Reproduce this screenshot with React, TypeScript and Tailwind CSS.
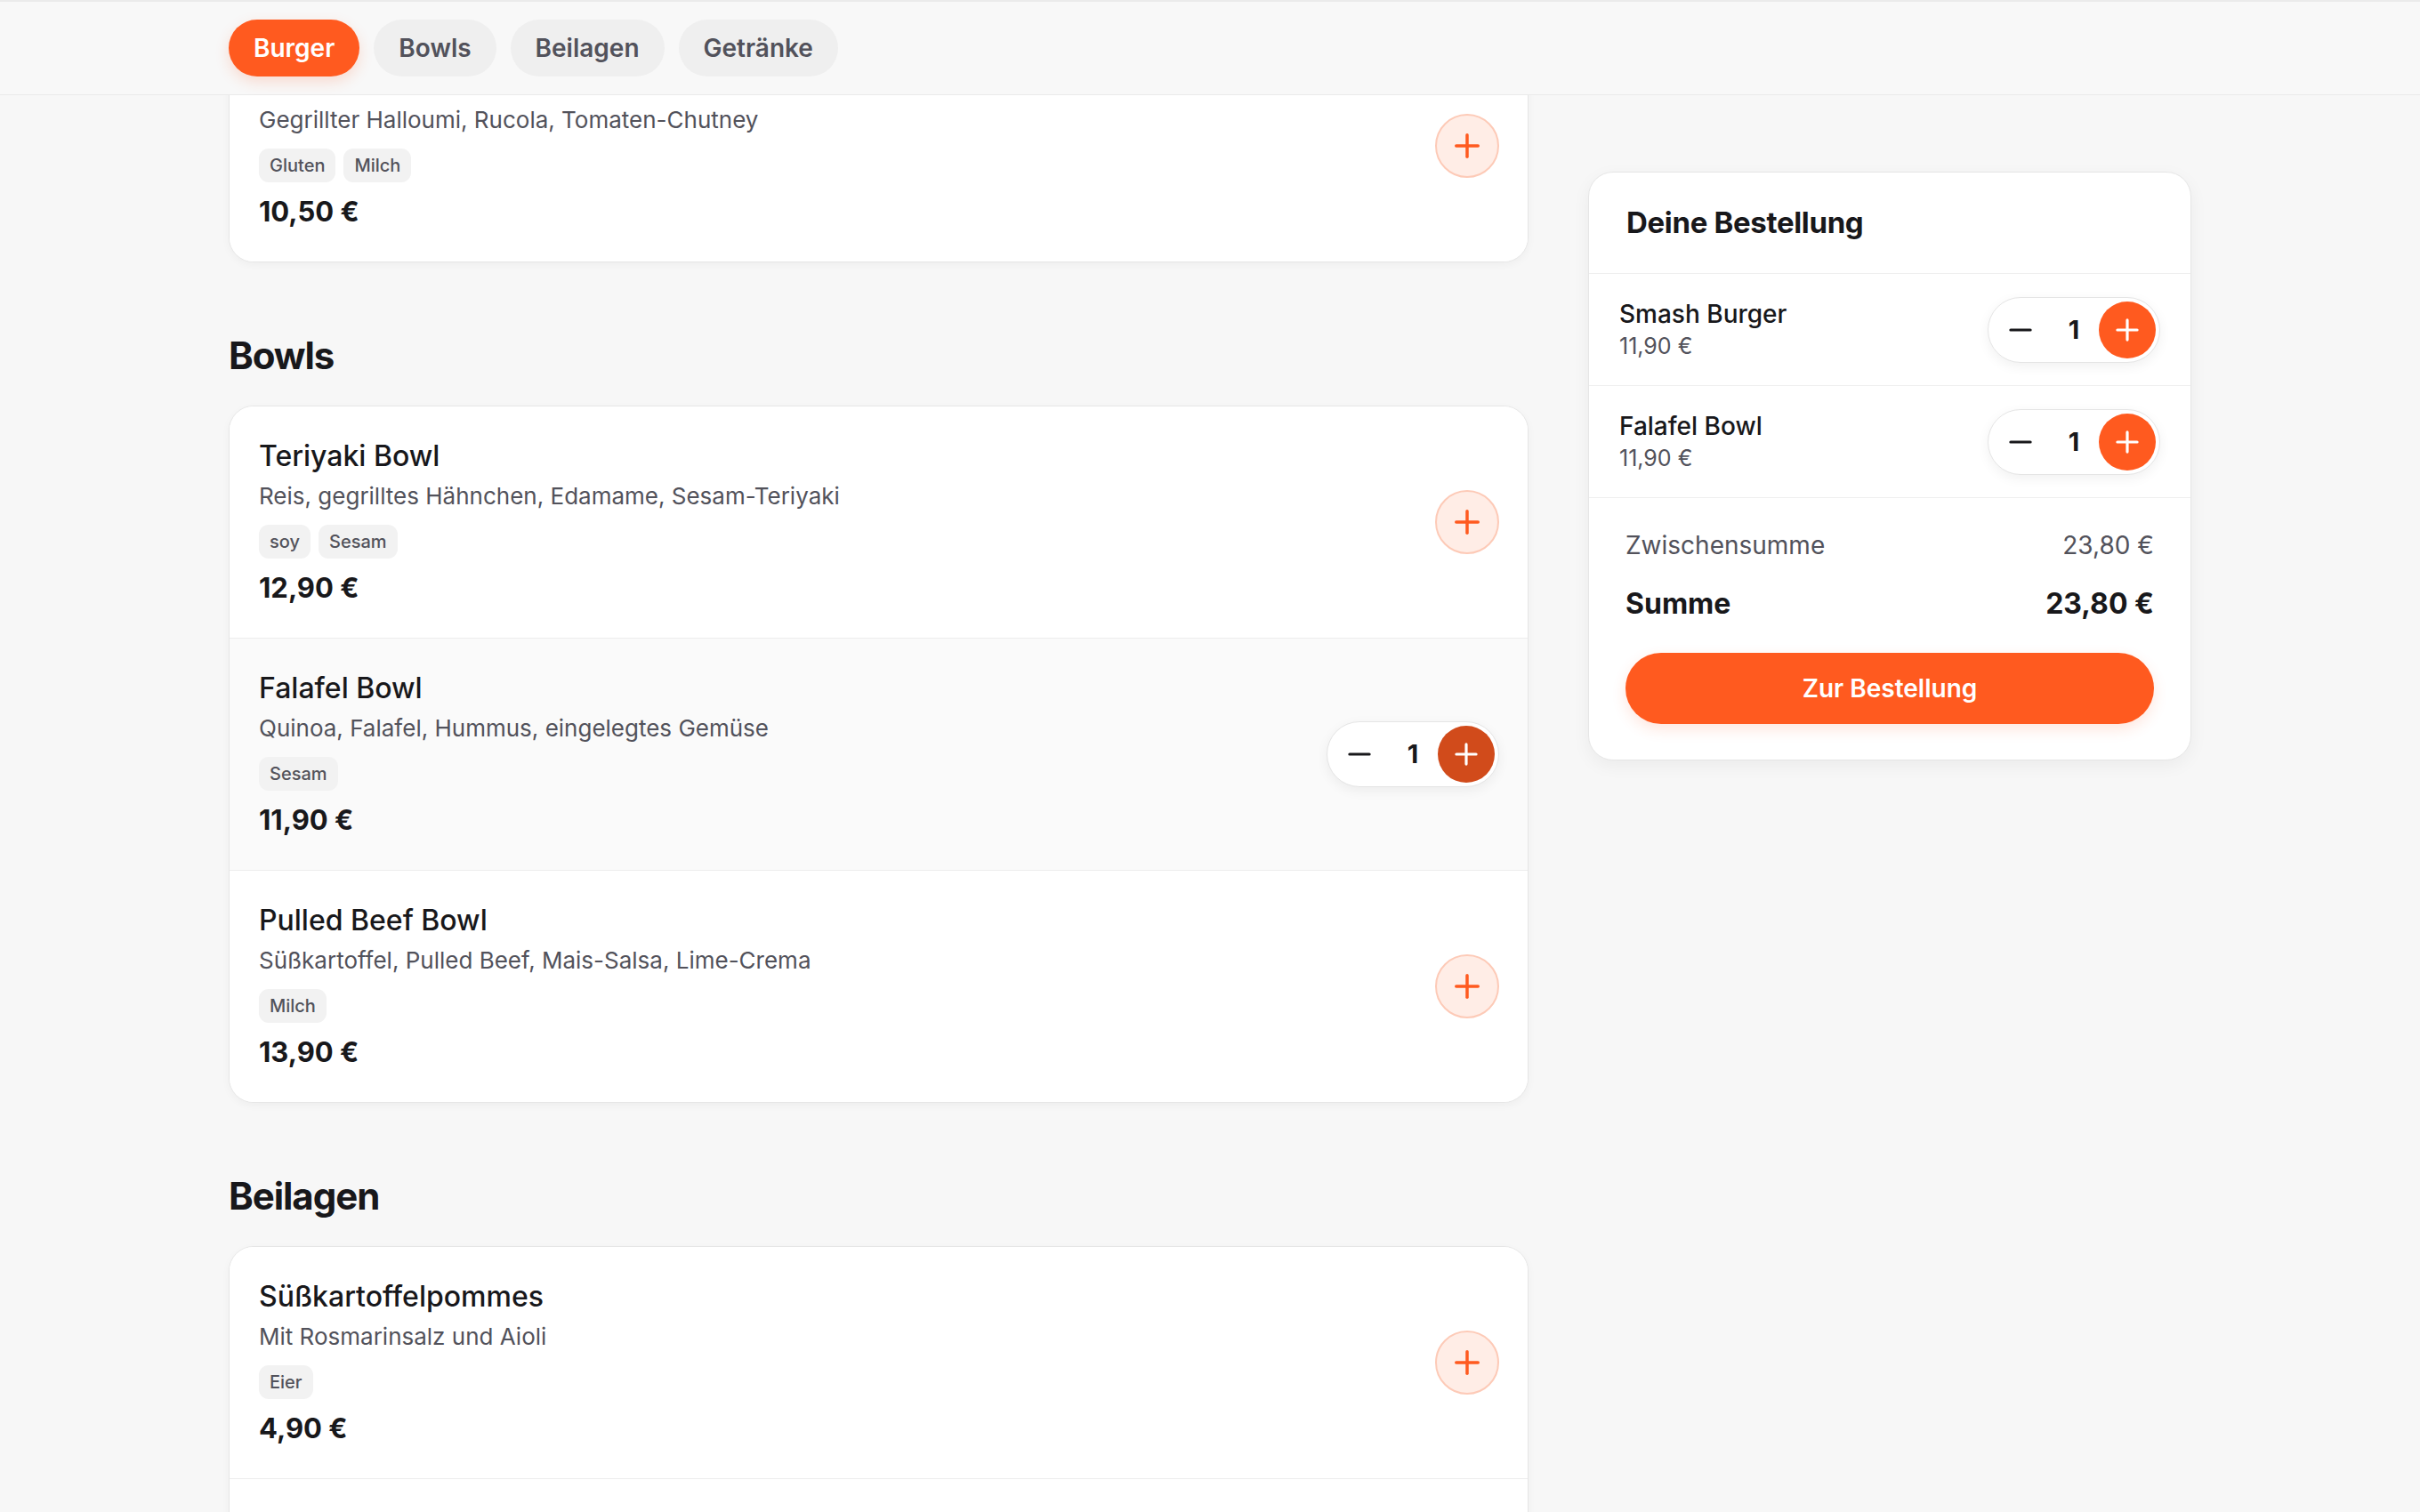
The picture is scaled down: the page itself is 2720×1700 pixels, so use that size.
import clsx from 'clsx';
import { Minus, Plus } from 'lucide-react';

type Item = {
  name: string;
  desc: string;
  tags: string[];
  price: string;
  qty?: number;
};

const burgers: Item[] = [
  {
    name: 'Halloumi Deluxe',
    desc: 'Gegrillter Halloumi, Rucola, Tomaten-Chutney',
    tags: ['Gluten', 'Milch'],
    price: '10,50 €',
  },
];

const bowls: Item[] = [
  {
    name: 'Teriyaki Bowl',
    desc: 'Reis, gegrilltes Hähnchen, Edamame, Sesam-Teriyaki',
    tags: ['soy', 'Sesam'],
    price: '12,90 €',
  },
  {
    name: 'Falafel Bowl',
    desc: 'Quinoa, Falafel, Hummus, eingelegtes Gemüse',
    tags: ['Sesam'],
    price: '11,90 €',
    qty: 1,
  },
  {
    name: 'Pulled Beef Bowl',
    desc: 'Süßkartoffel, Pulled Beef, Mais-Salsa, Lime-Crema',
    tags: ['Milch'],
    price: '13,90 €',
  },
];

const sides: Item[] = [
  {
    name: 'Süßkartoffelpommes',
    desc: 'Mit Rosmarinsalz und Aioli',
    tags: ['Eier'],
    price: '4,90 €',
  },
  {
    name: 'Pommes Frites',
    desc: 'Knusprig, mit Meersalz',
    tags: [],
    price: '3,90 €',
  },
];

const cart = [
  { name: 'Smash Burger', price: '11,90 €', qty: 1 },
  { name: 'Falafel Bowl', price: '11,90 €', qty: 1 },
];

const categories = ['Burger', 'Bowls', 'Beilagen', 'Getränke'];

function Stepper({ qty, dark }: { qty: number; dark?: boolean }) {
  return (
    <div className="flex items-center rounded-full border border-[#e5e5e5] bg-white p-[4px] shadow-[0_4px_14px_rgba(0,0,0,0.06)]">
      <button className="flex h-16 w-16 items-center justify-center text-[#18181b]">
        <Minus size={38} strokeWidth={2} />
      </button>
      <span className="w-[56px] text-center text-[29px] font-bold leading-none">{qty}</span>
      <button
        className={clsx(
          'flex h-16 w-16 items-center justify-center rounded-full text-white',
          dark ? 'bg-[#d14b1b]' : 'bg-[#ff5a1f]'
        )}
      >
        <Plus size={38} strokeWidth={2} />
      </button>
    </div>
  );
}

function MenuRow({ item, last }: { item: Item; last?: boolean }) {
  return (
    <div
      className={clsx(
        'flex items-center justify-between pl-[33px] pr-[32px] pt-[35px] pb-[36px]',
        item.qty ? 'bg-[#fafafa]' : 'bg-white',
        !last && 'border-b border-[#ededed]'
      )}
    >
      <div>
        <h3 className="text-[32px] font-medium leading-[41px]">{item.name}</h3>
        <p className="mt-[5px] text-[26px] leading-[39px] text-[#52525b]">{item.desc}</p>
        <div className="mt-[13px] flex h-[38px] gap-[9px]">
          {item.tags.map((t) => (
            <span
              key={t}
              className="flex h-[38px] items-center rounded-[11px] bg-[#f2f2f2] px-[12px] text-[20px] font-medium text-[#52525b]"
            >
              {t}
            </span>
          ))}
        </div>
        <div className="mt-[13px] text-[31px] font-bold leading-[40px]">{item.price}</div>
      </div>
      {item.qty ? (
        <Stepper qty={item.qty} dark />
      ) : (
        <button className="flex h-[72px] w-[72px] items-center justify-center rounded-full border-2 border-[#fdcab7] bg-[#ffede6] text-[#ff5a1f]">
          <Plus size={42} strokeWidth={2} />
        </button>
      )}
    </div>
  );
}

function MenuCard({ items }: { items: Item[] }) {
  return (
    <div className="overflow-hidden rounded-[28px] border border-[#e6e6e6] bg-white shadow-[0_3px_10px_rgba(0,0,0,0.04)]">
      {items.map((item, i) => (
        <MenuRow key={item.name} item={item} last={i === items.length - 1} />
      ))}
    </div>
  );
}

export default function App() {
  return (
    <div className="min-h-screen bg-[#f7f7f7] font-['Inter',sans-serif] text-[#18181b]">
      {/* Sticky category bar */}
      <header className="relative z-10 border-t-2 border-b border-[#ebebeb] bg-[#f8f8f8]">
        <div className="mx-auto flex w-[2206px] gap-4 py-5">
          {categories.map((c, i) => (
            <button
              key={c}
              className={clsx(
                'h-16 rounded-full px-7 text-[28px] font-semibold',
                i === 0
                  ? 'bg-[#ff5a1f] text-white shadow-[0_6px_16px_rgba(255,90,31,0.18)]'
                  : 'bg-[#efefef] text-[#52525b]'
              )}
            >
              {c}
            </button>
          ))}
        </div>
      </header>

      <div className="mx-auto -mt-[74px] flex w-[2206px] items-start gap-[67px]">
        {/* Menu */}
        <main className="flex w-[1461px] flex-col pb-24">
          <MenuCard items={burgers} />

          <h2 className="mt-[80px] mb-[31px] text-[42px] font-bold leading-[50px] tracking-tight">Bowls</h2>
          <MenuCard items={bowls} />

          <h2 className="mt-[80px] mb-[31px] text-[42px] font-bold leading-[50px] tracking-tight">Beilagen</h2>
          <MenuCard items={sides} />
        </main>

        {/* Cart */}
        <aside className="mt-[160px] w-[678px] overflow-hidden rounded-[28px] border border-[#e6e6e6] bg-white shadow-[0_6px_20px_rgba(0,0,0,0.05)]">
          <div className="border-b border-[#efefef] px-[42px] pt-[36px] pb-[37px]">
            <h2 className="text-[33px] font-bold leading-[40px] tracking-[-0.01em]">Deine Bestellung</h2>
          </div>
          {cart.map((c) => (
            <div
              key={c.name}
              className="flex h-[126px] items-center justify-between border-b border-[#efefef] pl-[34px] pr-[34px]"
            >
              <div>
                <div className="text-[28px] font-medium leading-[35px]">{c.name}</div>
                <div className="mt-[2px] text-[25px] leading-[32px] text-[#52525b]">{c.price}</div>
              </div>
              <Stepper qty={c.qty} />
            </div>
          ))}
          <div className="px-[41px] pt-[34px] pb-[40px]">
            <div className="flex justify-between text-[28px] leading-[39px] text-[#52525b]">
              <span>Zwischensumme</span>
              <span>23,80 €</span>
            </div>
            <div className="mt-[25px] flex justify-between text-[32px] font-bold leading-[42px]">
              <span>Summe</span>
              <span>23,80 €</span>
            </div>
            <button className="mt-[34px] h-[80px] w-full rounded-full bg-[#ff5a1f] text-[28px] font-semibold text-white shadow-[0_6px_16px_rgba(255,90,31,0.15)]">
              Zur Bestellung
            </button>
          </div>
        </aside>
      </div>
    </div>
  );
}
